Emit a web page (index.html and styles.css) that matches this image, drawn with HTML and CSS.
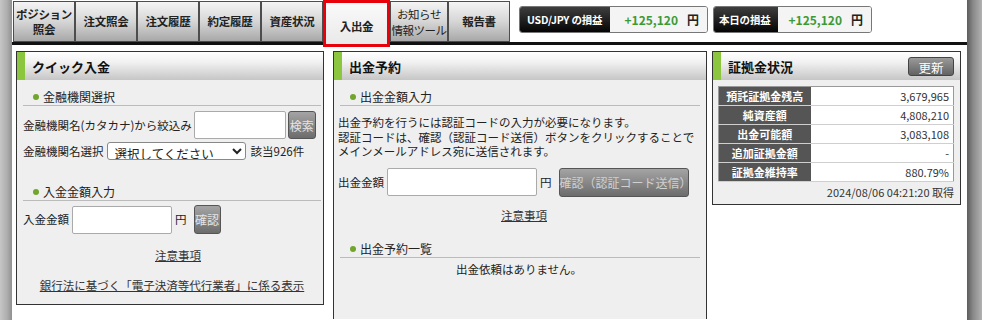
FILE: index.html
```html
<!DOCTYPE html>
<html lang="ja">
<head>
    <meta charset="UTF-8">
    <meta name="viewport" content="width=device-width, initial-scale=1.0">
    <title>入出金</title>
    <link rel="stylesheet" href="styles.css">
</head>
<body>
    <div class="frame">
        <div class="side-left"></div>
        <div class="main">
            <div class="topbar">
                <ul class="tabs">
                    <li class="tab">ポジション<br>照会</li>
                    <li class="tab">注文照会</li>
                    <li class="tab">注文履歴</li>
                    <li class="tab">約定履歴</li>
                    <li class="tab">資産状況</li>
                    <li class="tab active">入出金</li>
                    <li class="tab news">お知らせ<br>情報ツール</li>
                    <li class="tab">報告書</li>
                </ul>
                <div class="pl pl-pair">
                    <span class="pl-label">USD/JPY の損益</span>
                    <span class="pl-value"><span class="plus">+125,120</span>円</span>
                </div>
                <div class="pl pl-today">
                    <span class="pl-label">本日の損益</span>
                    <span class="pl-value"><span class="plus">+125,120</span>円</span>
                </div>
            </div>

            <div class="content">
                <!-- クイック入金 -->
                <section class="panel panel-left">
                    <div class="panel-head"><h2>クイック入金</h2></div>
                    <div class="panel-body">
                        <div class="sec-title"><span class="dot"></span>金融機関選択</div>
                        <div class="form-row first">
                            <span>金融機関名(カタカナ)から絞込み</span>
                            <input type="text" class="txt txt-kana">
                            <button class="btn btn-sq">検索</button>
                        </div>
                        <div class="form-row select-row">
                            <span>金融機関名選択</span>
                            <select class="bank-select">
                                <option>選択してください</option>
                            </select>
                            <span class="hits">該当926件</span>
                        </div>

                        <div class="sec-title sec-second"><span class="dot"></span>入金金額入力</div>
                        <div class="form-row amount-row">
                            <span>入金金額</span>
                            <input type="text" class="txt txt-amount">
                            <span class="yen">円</span>
                            <button class="btn btn-sq btn-tall">確認</button>
                        </div>
                        <p class="link-line note-left"><a href="#">注意事項</a></p>
                        <p class="link-line bank-law"><a href="#">銀行法に基づく「電子決済等代行業者」に係る表示</a></p>
                    </div>
                </section>

                <!-- 出金予約 -->
                <section class="panel panel-mid">
                    <div class="panel-head"><h2>出金予約</h2></div>
                    <div class="panel-body">
                        <div class="sec-title"><span class="dot"></span>出金金額入力</div>
                        <p class="info">出金予約を行うには認証コードの入力が必要になります。<br>認証コードは、確認（認証コード送信）ボタンをクリックすることで<br>メインメールアドレス宛に送信されます。</p>
                        <div class="form-row withdraw-row">
                            <span>出金金額</span>
                            <input type="text" class="txt txt-withdraw">
                            <span class="yen">円</span>
                            <button class="btn btn-send">確認（認証コード送信）</button>
                        </div>
                        <p class="link-line note-mid"><a href="#">注意事項</a></p>
                        <div class="sec-title sec-list"><span class="dot"></span>出金予約一覧</div>
                        <p class="empty">出金依頼はありません。</p>
                    </div>
                </section>

                <!-- 証拠金状況 -->
                <section class="panel panel-right">
                    <div class="panel-head">
                        <h2>証拠金状況</h2>
                        <button class="btn btn-refresh">更新</button>
                    </div>
                    <div class="panel-body">
                        <table class="margin-table">
                            <tr><th>預託証拠金残高</th><td>3,679,965</td></tr>
                            <tr><th>純資産額</th><td>4,808,210</td></tr>
                            <tr><th>出金可能額</th><td>3,083,108</td></tr>
                            <tr><th>追加証拠金額</th><td>-</td></tr>
                            <tr><th>証拠金維持率</th><td>880.79%</td></tr>
                        </table>
                        <p class="stamp">2024/08/06 04:21:20 取得</p>
                    </div>
                </section>
            </div>
        </div>
        <div class="side-right"></div>
    </div>
</body>
</html>
```

FILE: styles.css
```css
* {
    box-sizing: border-box;
}
html, body {
    margin: 0;
    height: 100%;
}
body {
    font-family: "Noto Sans CJK JP", "Noto Sans", sans-serif;
    font-size: 11.5px;
    line-height: 15px;
    color: #222;
    background: #fff;
    overflow: hidden;
}
.frame {
    display: flex;
    height: 100vh;
}
.side-left {
    width: 12px;
    background: linear-gradient(to right, #c6c6c6, #adadad 60%, #8f8f8f);
}
.side-right {
    width: 15px;
    background: linear-gradient(to right, #5c5c5c, #888 40%, #b2b2b2);
}
.main {
    flex: 1;
    background: #fff;
}

/* タブ */
.topbar {
    display: flex;
    align-items: flex-start;
    height: 42px;
    box-sizing: content-box;
    border-bottom: 3px solid #111;
}
.tabs {
    display: flex;
    align-items: flex-start;
    margin: 0 0 0 1px;
    padding: 0;
    list-style: none;
}
.tab {
    width: 62px;
    height: 41px;
    margin-top: 1px;
    display: flex;
    align-items: center;
    justify-content: center;
    text-align: center;
    border: 1px solid #4d4d4d;
    background: linear-gradient(#f4f4f4, #d6d6d6 50%, #a8a8a8);
    font-size: 11.5px;
    line-height: 15px;
    font-weight: bold;
    letter-spacing: -0.3px;
    color: #222;
    white-space: nowrap;
}
.tab.active {
    position: relative;
    z-index: 1;
    width: 67px;
    height: 47px;
    margin-top: 0;
    align-items: flex-end;
    padding-bottom: 10px;
    border: 3px solid #e8000b;
    background: linear-gradient(#fafafa, #e9e9e9);
}
.tab.news {
    width: 58px;
    font-size: 11.5px;
    line-height: 16px;
    font-weight: normal;
    letter-spacing: -0.5px;
    padding-top: 1px;
}

/* 損益 */
.pl {
    display: flex;
    height: 27px;
    margin: 6px 0 0 9px;
    border: 1px solid #777;
    border-radius: 3px;
    overflow: hidden;
    font-size: 12px;
    font-weight: bold;
    white-space: nowrap;
}
.pl-label {
    display: flex;
    align-items: center;
    padding: 0 7px;
    font-size: 10.5px;
    letter-spacing: -0.2px;
    color: #fff;
    background: linear-gradient(#3e3e3e, #050505);
}
.pl-value {
    display: flex;
    align-items: center;
    justify-content: flex-end;
    gap: 9px;
    padding-right: 8px;
    background: #f4f4f4;
}
.pl-pair .pl-label { width: 90px; }
.pl-pair .pl-value { width: 97px; }
.pl-today { margin-left: 5px; }
.pl-today .pl-label { width: 64px; padding: 0 5px; }
.pl-today .pl-value { width: 93px; }
.plus {
    color: #3c9a35;
}

/* パネル */
.content {
    display: flex;
    align-items: flex-start;
    padding: 6px 0 0 4px;
}
.panel {
    border: 1px solid #333;
    background: #efefef;
}
.panel-left {
    width: 308px;
    height: 254px;
    margin-right: 9px;
}
.panel-mid {
    width: 374px;
    height: 268px;
    margin-right: 5px;
    border-bottom-width: 0;
}
.panel-right {
    width: 249px;
}
.panel-head {
    display: flex;
    align-items: center;
    justify-content: space-between;
    height: 28px;
    padding: 0 6px 0 7px;
    border-left: 8px solid #8cc63f;
    background: linear-gradient(#fff, #f2f2f2 35%, #c6c6c6);
}
.panel-head h2 {
    margin: 0;
    font-size: 13px;
    font-weight: bold;
    color: #111;
}
.panel-body {
    padding: 0 2px 0 6px;
}
.panel-mid .panel-body {
    padding: 0 6px 0 4px;
}
.panel-right .panel-body {
    padding: 0 6px 5px 5px;
}

.sec-title {
    display: flex;
    align-items: center;
    height: 17px;
    margin-top: 9px;
    padding-left: 10px;
    line-height: 16px;
    font-size: 12px;
    border-bottom: 1px solid #bbb;
}
.panel-mid .sec-title {
    margin-left: 2px;
}
.dot {
    width: 6px;
    height: 6px;
    margin-right: 4px;
    border-radius: 50%;
    background: #72a52b;
}
.sec-second {
    margin-top: 24px;
}
.sec-list {
    margin-top: 18px;
}

.form-row {
    display: flex;
    align-items: center;
    gap: 2px;
    white-space: nowrap;
}
.form-row.first {
    margin-top: 5px;
}
.select-row {
    margin-top: 3px;
    gap: 3px;
}
.hits {
    margin-left: 2px;
}
.amount-row {
    margin-top: 4px;
    gap: 3px;
}
.withdraw-row {
    margin-top: 9px;
    gap: 3px;
}
.txt {
    height: 28px;
    border: 1px solid #aaa;
    border-radius: 2px;
    background: #fff;
    font: inherit;
}
.txt-kana { width: 92px; }
.txt-amount { width: 100px; }
.txt-withdraw { width: 150px; }
.yen {
    margin-right: 4px;
}
.bank-select {
    width: 139px;
    height: 18px;
    padding: 0 0 0 3px;
    font-family: inherit;
    font-size: 12.5px;
    border: 1px solid #888;
    border-radius: 3px;
    background: #fff;
    color: #222;
}

.btn {
    border: 1px solid #555;
    border-radius: 3px;
    background: linear-gradient(#a4a4a4, #6c6c6c);
    color: #e4e4e4;
    font-family: inherit;
    font-size: 12px;
    padding: 0;
    cursor: pointer;
}
.btn-sq {
    width: 28px;
    height: 28px;
}
.btn-tall {
    height: 29px;
    width: 27px;
}
.btn-send {
    width: 130px;
    height: 29px;
    color: #d0d0d0;
}
.btn-refresh {
    width: 46px;
    height: 19px;
    font-size: 12.5px;
    color: #fff;
    background: linear-gradient(#9a9a9a, #626262);
    border-color: #444;
}

.link-line {
    margin: 0;
    text-align: center;
    line-height: 16px;
}
.link-line a {
    color: #333;
}
.note-left {
    margin-top: 13px;
    padding-left: 12px;
}
.bank-law {
    margin-top: 14px;
}
.note-mid {
    margin-top: 10px;
    padding-left: 10px;
}
.info {
    margin: 9px 0 0;
    line-height: 14.5px;
    white-space: nowrap;
}
.empty {
    margin: 3px 0 0;
    text-align: center;
    line-height: 16px;
}

/* 証拠金テーブル */
.margin-table {
    width: 100%;
    margin-top: 6px;
    border-collapse: collapse;
    border: 1px solid #999;
}
.margin-table th {
    width: 92px;
    height: 19px;
    padding: 0;
    background: #555;
    color: #fff;
    font-size: 11px;
    line-height: 18px;
    border-bottom: 1px solid #cfcfcf;
}
.margin-table td {
    padding: 0 4px;
    background: #fff;
    text-align: right;
    font-size: 11px;
    color: #333;
    border-bottom: 1px solid #cfcfcf;
}
.stamp {
    margin: 3px 0 0;
    text-align: right;
    font-size: 11px;
    line-height: 14px;
    color: #333;
}
```
